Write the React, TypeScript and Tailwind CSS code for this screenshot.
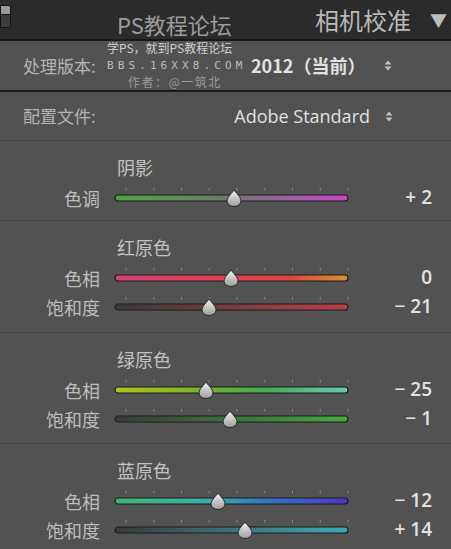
import React from "react";

type Stop = [number, string];

type SliderRow = {
  label: string;
  value: string;
  pos: number;
  stops: Stop[];
};

type Section = {
  title: string;
  height: string;
  rows: SliderRow[];
};

const cjk = "font-['Noto_Sans_CJK_SC','Noto_Sans',sans-serif]";

const sections: Section[] = [
  {
    title: "阴影",
    height: "h-[80px]",
    rows: [
      {
        label: "色调",
        value: "+ 2",
        pos: 119,
        stops: [
          [0, "#4fa543"],
          [0.45, "#6a7d66"],
          [0.6, "#866c89"],
          [1, "#c945cc"],
        ],
      },
    ],
  },
  {
    title: "红原色",
    height: "h-[112px]",
    rows: [
      {
        label: "色相",
        value: "0",
        pos: 116,
        stops: [
          [0, "#d3407c"],
          [0.3, "#e0405e"],
          [0.75, "#e0453e"],
          [1, "#d8932e"],
        ],
      },
      {
        label: "饱和度",
        value: "− 21",
        pos: 94,
        stops: [
          [0, "#3a3a3a"],
          [1, "#bb4048"],
        ],
      },
    ],
  },
  {
    title: "绿原色",
    height: "h-[111px]",
    rows: [
      {
        label: "色相",
        value: "− 25",
        pos: 91,
        stops: [
          [0, "#b4c21e"],
          [0.4, "#74b02e"],
          [0.65, "#40b050"],
          [1, "#68cab6"],
        ],
      },
      {
        label: "饱和度",
        value: "− 1",
        pos: 115,
        stops: [
          [0, "#3a3a3a"],
          [1, "#42ab3e"],
        ],
      },
    ],
  },
  {
    title: "蓝原色",
    height: "flex-1",
    rows: [
      {
        label: "色相",
        value: "− 12",
        pos: 103,
        stops: [
          [0, "#42b374"],
          [0.35, "#3fb1a4"],
          [0.65, "#3278c4"],
          [1, "#5232c4"],
        ],
      },
      {
        label: "饱和度",
        value: "+ 14",
        pos: 130,
        stops: [
          [0, "#3a3a3a"],
          [1, "#3fa9ba"],
        ],
      },
    ],
  },
];

const UpDown = () => (
  <svg width="8" height="11" viewBox="0 0 8 11">
    <path d="M4 0.5 L7.5 4.5 L0.5 4.5 Z" fill="#c0c0c0" />
    <path d="M4 10.5 L7.5 6.5 L0.5 6.5 Z" fill="#c0c0c0" />
  </svg>
);

const Slider = ({ id, pos, stops }: { id: string; pos: number; stops: Stop[] }) => {
  const cx = 3 + pos;
  const ticks = Array.from({ length: 9 }, (_, i) => 14 + i * 27.75);
  return (
    <svg width="240" height="22" viewBox="0 0 240 22">
      <defs>
        <linearGradient id={`g-${id}`} x1="0" x2="1" y1="0" y2="0">
          {stops.map(([o, c]) => (
            <stop key={o} offset={o} stopColor={c} />
          ))}
        </linearGradient>
        <linearGradient id={`t-${id}`} x1="0" x2="0" y1="0" y2="1">
          <stop offset="0" stopColor="#f2f2f2" />
          <stop offset="1" stopColor="#9c9c9c" />
        </linearGradient>
      </defs>
      {ticks.map((x) => (
        <line key={x} x1={x} x2={x} y1="1" y2="3.5" stroke="#8a8a8a" strokeWidth="1" />
      ))}
      <rect x="3" y="8" width="233" height="6" rx="3" fill={`url(#g-${id})`} stroke="#1c1c1c" strokeWidth="1.2" />
      <path
        d={`M ${cx} 3 C ${cx + 2} 6 ${cx + 7} 10 ${cx + 7} 14 A 7 5.5 0 0 1 ${cx - 7} 14 C ${cx - 7} 10 ${cx - 2} 6 ${cx} 3 Z`}
        fill={`url(#t-${id})`}
        stroke="#262626"
        strokeWidth="1"
      />
    </svg>
  );
};

export default function App() {
  return (
    <div className={`w-[451px] h-[549px] bg-[#525252] overflow-hidden flex flex-col ${cjk}`}>
      <div className="relative h-[41px] shrink-0 flex items-center bg-[#2b2b2b] border-b-2 border-[#191919]">
        <div className="self-start mt-[5px] w-[11px] h-[23px] border border-[#111] rounded-r-[2px] overflow-hidden flex flex-col">
          <div className="h-[8px] bg-[#9a9a9a]" />
          <div className="flex-1 bg-[#3c3c3c] border-t border-[#151515]" />
        </div>
        <span className="ml-auto text-[24px] leading-none text-[#b9b9b9]">相机校准</span>
        <span className="ml-[19px] mr-[4px] text-[17px] leading-none text-[#bdbdbd]">▼</span>
        <span className="absolute left-[117px] top-[11px] text-[22px] leading-[26px] text-[#9c9c9c]">PS教程论坛</span>
      </div>

      <div className="relative h-[51px] shrink-0 flex items-center border-b-2 border-[#1d1d1d]">
        <span className="ml-[23px] w-[228px] text-[17px] text-[#b5b5b5]">处理版本:</span>
        <span className="text-[18px] font-semibold text-[#e2e2e2]">2012（当前）</span>
        <span className="ml-auto mr-[59px] flex">
          <UpDown />
        </span>
        <div className="absolute left-[107px] top-[0px] flex flex-col items-start">
          <span className="text-[12px] leading-[14px] text-[#cfcfcf]">学PS，就到PS教程论坛</span>
          <span className="mt-[4px] font-['DejaVu_Sans_Mono',monospace] text-[11px] leading-[13px] tracking-[4.1px] text-[#bdbdbd]">BBS.16XX8.COM</span>
          <span className="mt-[3px] ml-[21px] text-[12px] leading-[14px] tracking-[1.5px] text-[#9a9a9a]">作者：@一筑北</span>
        </div>
      </div>

      <div className="h-[49px] shrink-0 flex items-center border-b border-[#454545]">
        <span className="ml-[23px] text-[17px] text-[#b5b5b5]">配置文件:</span>
        <span className="ml-auto font-['Open_Sans',sans-serif] text-[18px] text-[#e0e0e0]">Adobe Standard</span>
        <span className="ml-[15px] mr-[58px] flex">
          <UpDown />
        </span>
      </div>

      {sections.map((s, si) => (
        <div
          key={s.title}
          className={`${s.height} shrink-0 flex flex-col pt-[15px] ${si < sections.length - 1 ? "border-b border-[#454545]" : ""}`}
        >
          <span className="ml-[117px] h-[22px] text-[18px] leading-[22px] text-[#c2c2c2]">{s.title}</span>
          <div className="mt-[5px] flex flex-col">
            {s.rows.map((r, ri) => (
              <div key={r.label} className="h-[29px] flex items-center">
                <span className="w-[100px] text-right text-[18px] leading-none text-[#bdbdbd]">{r.label}</span>
                <span className="ml-[12px] flex">
                  <Slider id={`${si}-${ri}`} pos={r.pos} stops={r.stops} />
                </span>
                <span className="flex-1 pr-[19px] text-right font-['Open_Sans',sans-serif] text-[19px] font-semibold leading-none text-[#e2e2e2]">
                  {r.value}
                </span>
              </div>
            ))}
          </div>
        </div>
      ))}
    </div>
  );
}
